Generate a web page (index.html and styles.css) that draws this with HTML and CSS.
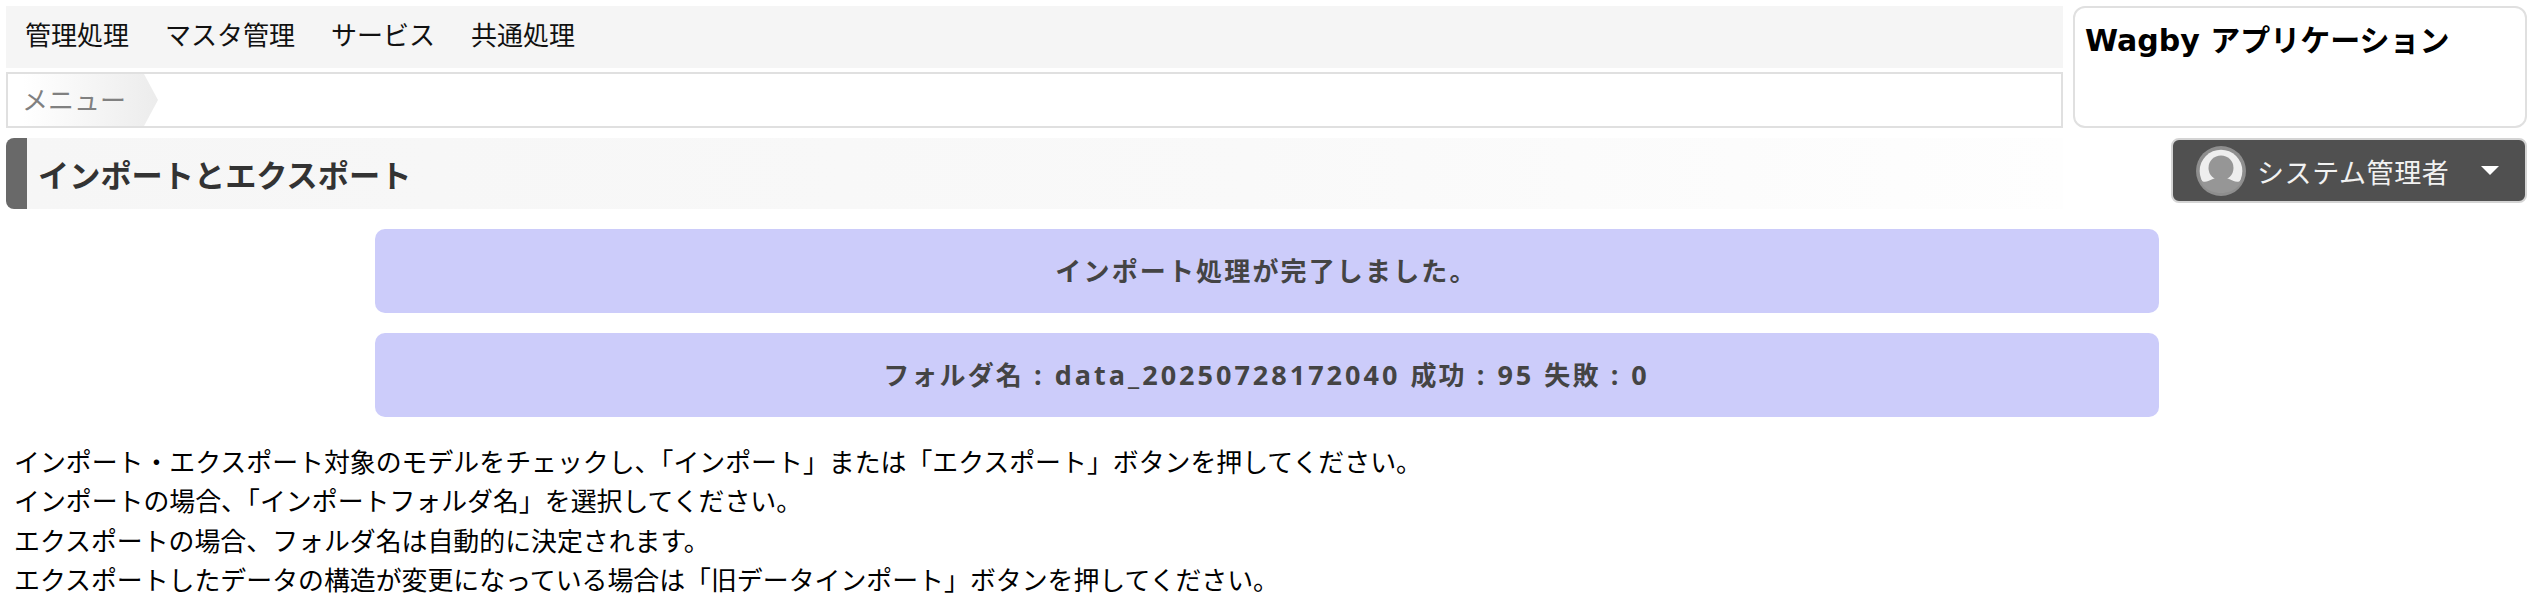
FILE: index.html
```html
<!DOCTYPE html>
<html lang="ja">
<head>
<meta charset="utf-8">
<title>インポートとエクスポート</title>
<link rel="stylesheet" href="styles.css">
</head>
<body>
<div class="top">
  <div class="top-left">
    <nav class="menubar">
      <span class="menu-item">管理処理</span>
      <span class="menu-item">マスタ管理</span>
      <span class="menu-item">サービス</span>
      <span class="menu-item">共通処理</span>
    </nav>
    <div class="crumbs"><span class="crumb">メニュー</span></div>
  </div>
  <div class="appbox">Wagby アプリケーション</div>
</div>
<div class="title-row">
  <h1 class="title">インポートとエクスポート</h1>
  <div class="user">
    <svg class="avatar" viewBox="0 0 48 48" width="50" height="50">
      <circle cx="24" cy="24" r="24" fill="#8e8e8e"/>
      <circle cx="24" cy="24" r="20.5" fill="#eeeeee"/>
      <circle cx="24" cy="21" r="12" fill="#969696"/>
      <path d="M4 33 C12 37 14 30 24 30 C34 30 36 37 44 33 C40 42 32 45 24 45 C16 45 8 42 4 33 Z" fill="#969696"/>
    </svg>
    <span class="user-name">システム管理者</span>
    <span class="caret"></span>
  </div>
</div>
<div class="msg">インポート処理が完了しました。</div>
<div class="msg"><span>フォルダ名<span class="latin"> : data_20250728172040 </span>成功<span class="latin"> : 95 </span>失敗<span class="latin"> : 0</span></span></div>
<div class="desc">
  <p>インポート・エクスポート対象のモデルをチェックし、「インポート」または「エクスポート」ボタンを押してください。</p>
  <p>インポートの場合、「インポートフォルダ名」を選択してください。</p>
  <p>エクスポートの場合、フォルダ名は自動的に決定されます。</p>
  <p>エクスポートしたデータの構造が変更になっている場合は「旧データインポート」ボタンを押してください。</p>
</div>
</body>
</html>
```
FILE: styles.css
```css
* { box-sizing: border-box; }
html, body { margin: 0; padding: 0; }
body {
  padding: 6px 6px 0;
  background: #fff;
  color: #000;
  font-family: "DejaVu Sans", "Noto Sans CJK JP", sans-serif;
  overflow: hidden;
}
.top { display: flex; gap: 10px; }
.top-left { flex: 1; display: flex; flex-direction: column; gap: 4px; min-width: 0; }
.menubar {
  height: 62px;
  background: #f5f5f5;
  display: flex;
  align-items: center;
  padding: 0 19px 8px;
  gap: 36px;
  font-family: "Noto Sans CJK JP", sans-serif;
  font-size: 26px;
  color: #111;
}
.crumbs {
  height: 56px;
  border: 2px solid #e0e0e0;
  background: #fff;
  display: flex;
  align-items: stretch;
}
.crumb {
  width: 150px;
  display: flex;
  align-items: center;
  padding: 0 0 3px 14px;
  font-family: "Noto Sans CJK JP", sans-serif;
  font-size: 26px;
  color: #808080;
  background: linear-gradient(90deg, #fff 10%, #ececec 100%);
  clip-path: polygon(0 0, 136px 0, 100% 50%, 136px 100%, 0 100%);
}
.appbox {
  width: 454px;
  height: 122px;
  border: 2px solid #e0e0e0;
  border-radius: 12px;
  padding: 12px 10px;
  font-size: 30px;
  line-height: 42px;
  font-weight: 700;
  font-family: "DejaVu Sans", "Noto Sans CJK JP", sans-serif;
}
.title-row { display: flex; gap: 10px; margin-top: 10px; align-items: flex-start; }
.title {
  flex: 1;
  height: 71px;
  margin: 0;
  border-left: 21px solid #696969;
  border-radius: 8px 0 0 8px;
  background: linear-gradient(90deg, #f6f6f6, #f9f9f9 60%, #fefefe);
  padding-left: 11px;
  display: flex;
  align-items: center;
  font-family: "Noto Sans CJK JP", sans-serif;
  font-size: 31.2px;
  font-weight: 700;
  color: #333;
}
.user {
  width: 356px;
  height: 65px;
  margin-left: 98px;
  background: #505050;
  border: 2px solid #d4d4d4;
  border-radius: 8px;
  display: flex;
  align-items: center;
  padding-left: 23px;
  color: #fff;
  font-family: "Noto Sans CJK JP", sans-serif;
  font-size: 27px;
}
.avatar { flex: none; }
.user-name { margin-left: 11px; letter-spacing: 0.6px; color: #f2f2f2; padding-top: 2px; }
.caret {
  margin-left: 32px;
  width: 0;
  height: 0;
  border-left: 9px solid transparent;
  border-right: 9px solid transparent;
  border-top: 9px solid #fff;
}
.msg {
  width: 1784px;
  height: 84px;
  margin: 20px auto 0;
  padding-bottom: 3px;
  background: #ccccfa;
  border-radius: 10px;
  display: flex;
  align-items: center;
  justify-content: center;
  font-size: 26px;
  font-weight: 700;
  letter-spacing: 2.15px;
  color: #444;
  font-family: "Open Sans", "Noto Sans CJK JP", sans-serif;
}
.msg + .msg { margin-top: 20px; }
.latin { font-size: 27px; letter-spacing: 3px; white-space: pre; }
.desc {
  margin-top: 24px;
  padding-left: 8px;
  font-family: "Noto Sans CJK JP", sans-serif;
  font-size: 25.9px;
  line-height: 39.4px;
  color: #000;
}
.desc p { margin: 0; white-space: nowrap; }
```
